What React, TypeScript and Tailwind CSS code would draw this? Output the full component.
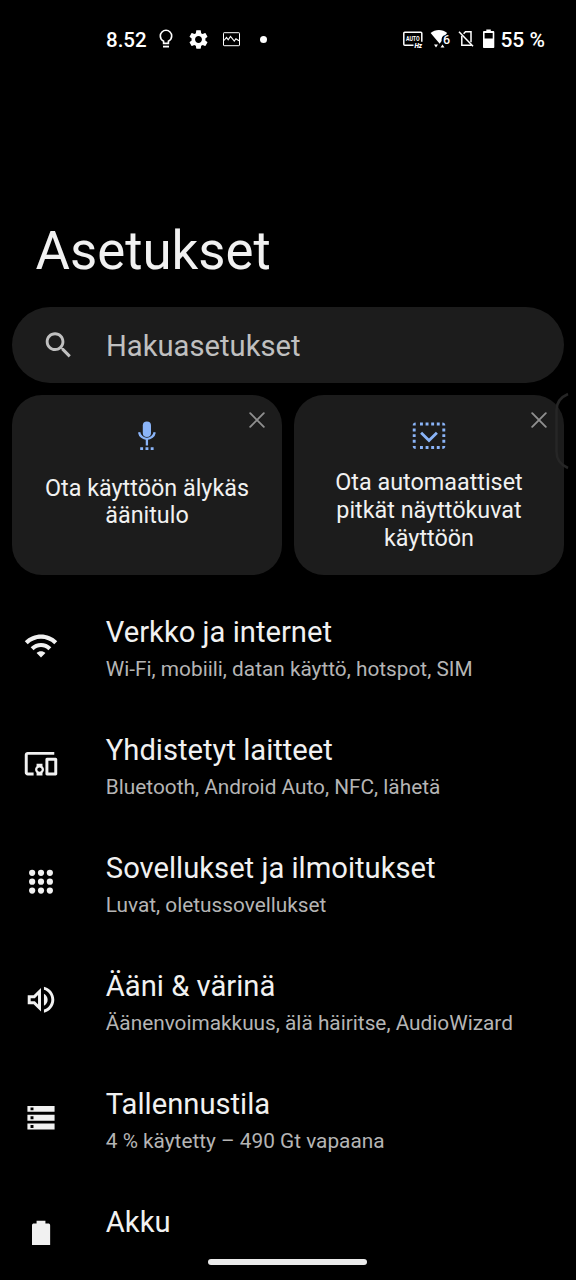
import type { ReactNode } from "react";

const items = [
  {
    title: "Verkko ja internet",
    summary: "Wi-Fi, mobiili, datan käyttö, hotspot, SIM",
    icon: (
      <path d="M1 9l2 2c4.97-4.97 13.03-4.97 18 0l2-2C16.93 2.93 7.08 2.93 1 9zm8 8l3 3 3-3c-1.65-1.66-4.34-1.66-6 0zm-4-4l2 2c2.76-2.76 7.24-2.76 10 0l2-2C15.14 9.14 8.87 9.14 5 13z" />
    ),
  },
  {
    title: "Yhdistetyt laitteet",
    summary: "Bluetooth, Android Auto, NFC, lähetä",
    icon: (
      <path d="M3 6h18V4H3c-1.1 0-2 .9-2 2v12c0 1.1.9 2 2 2h4v-2H3V6zm10 6H9v1.78c-.61.55-1 1.33-1 2.22s.39 1.67 1 2.22V20h4v-1.78c.61-.55 1-1.34 1-2.22s-.39-1.67-1-2.22V12zm-2 5.5c-.83 0-1.5-.67-1.5-1.5s.67-1.5 1.5-1.5 1.5.67 1.5 1.5-.67 1.5-1.5 1.5zM22 8h-6c-.5 0-1 .5-1 1v10c0 .5.5 1 1 1h6c.5 0 1-.5 1-1V9c0-.5-.5-1-1-1zm-1 10h-4v-8h4v8z" />
    ),
  },
  {
    title: "Sovellukset ja ilmoitukset",
    summary: "Luvat, oletussovellukset",
    icon: (
      <>
        {[6, 12, 18].map((cy) =>
          [6, 12, 18].map((cx) => (
            <circle key={`${cx}-${cy}`} cx={cx} cy={cy} r="2.1" />
          ))
        )}
      </>
    ),
  },
  {
    title: "Ääni & värinä",
    summary: "Äänenvoimakkuus, älä häiritse, AudioWizard",
    icon: (
      <path d="M3 9v6h4l5 5V4L7 9H3zm7-.17v6.34L7.83 13H5v-2h2.83L10 8.83zM16.5 12c0-1.77-1.02-3.29-2.5-4.03v8.05c1.48-.73 2.5-2.25 2.5-4.02zM14 3.23v2.06c2.89.86 5 3.54 5 6.71s-2.11 5.85-5 6.71v2.06c4.01-.91 7-4.49 7-8.77 0-4.28-2.99-7.86-7-8.77z" />
    ),
  },
  {
    title: "Tallennustila",
    summary: "4 % käytetty – 490 Gt vapaana",
    icon: (
      <path d="M2.8 4v4h18.4V4H2.8zm4.1 3h-2V5h2v2zM2.8 10v4h18.4v-4H2.8zm4.1 3h-2v-2h2v2zM2.8 16v4h18.4v-4H2.8zm4.1 3h-2v-2h2v2z" />
    ),
  },
  {
    title: "Akku",
    // row runs under the navigation bar, only the title is visible
    summary: "",
    icon: (
      <path d="M9 1.8h6v2h1.800c.9 0 1.400.4 1.400 1.200V18.300H5.900V5c0-.8.5-1.200 1.400-1.200H9z" />
    ),
  },
];

const StatusBar = () => (
  <header className="flex h-[78px] items-center pl-[106px] pr-[31px] text-white">
    <span className="w-[52px] pt-[3px] text-[20.5px] font-medium">8.52</span>
    <svg className="h-[20px] w-[16px]" viewBox="0 0 16 20" fill="none" stroke="currentColor">
      <path
        d="M5.6 14.4v-2.1C3.7 11.2 2.3 9.6 2.3 7a5.7 5.7 0 0 1 11.4 0c0 2.6-1.4 4.2-3.3 5.3v2.1z"
        strokeWidth="1.6"
      />
      <path d="M5 17.6h6" strokeWidth="1.8" />
    </svg>
    <svg className="ml-[13px] h-[23px] w-[23px]" viewBox="0 0 24 24" fill="currentColor">
      <path d="M19.14 12.94c.04-.3.06-.61.06-.94 0-.32-.02-.64-.07-.94l2.03-1.58c.18-.14.23-.41.12-.61l-1.92-3.32c-.12-.22-.37-.29-.59-.22l-2.39.96c-.5-.38-1.03-.7-1.62-.94l-.36-2.54c-.04-.24-.24-.41-.48-.41h-3.84c-.24 0-.43.17-.47.41l-.36 2.54c-.59.24-1.13.57-1.62.94l-2.39-.96c-.22-.08-.47 0-.59.22L2.74 8.87c-.12.21-.08.47.12.61l2.03 1.58c-.05.3-.09.63-.09.94s.02.64.07.94l-2.03 1.58c-.18.14-.23.41-.12.61l1.92 3.32c.12.22.37.29.59.22l2.39-.96c.5.38 1.03.7 1.62.94l.36 2.54c.05.24.24.41.48.41h3.84c.24 0 .44-.17.47-.41l.36-2.54c.59-.24 1.13-.56 1.62-.94l2.39.96c.22.08.47 0 .59-.22l1.92-3.32c.12-.22.07-.47-.12-.61l-2.01-1.58zM12 15.6c-1.98 0-3.6-1.62-3.6-3.6s1.62-3.6 3.6-3.6 3.6 1.62 3.6 3.6-1.62 3.6-3.6 3.6z" />
    </svg>
    <svg className="ml-[13px] h-[15px] w-[17px]" viewBox="0 0 17 15" fill="none" stroke="currentColor">
      <rect x=".5" y=".7" width="16" height="13" rx=".6" strokeWidth="1" />
      <path d="M1 8.5l2.5-3L5.2 7.8l2.3-3.3 3.8 4.5 1.6-2.3L16 8.8" strokeWidth="1.1" />
    </svg>
    <span className="ml-[20px] size-[7px] rounded-full bg-white" />

    <div className="ml-auto flex items-center">
      <svg className="h-[20px] w-[21px]" viewBox="0 0 21 20" fill="none" stroke="currentColor">
        <path d="M11.500 16.200H2.800a1 1 0 0 1-1-1V4.300a1 1 0 0 1 1-1h16a1 1 0 0 1 1 1v8.500" strokeWidth="1.5" />
        <text
          x="10.8"
          y="12"
          textAnchor="middle"
          textLength="13.8"
          lengthAdjust="spacingAndGlyphs"
          fill="currentColor"
          stroke="none"
          className="font-['Roboto',sans-serif] text-[7px] font-bold"
        >
          AUTO
        </text>
        <text x="12.4" y="18.7" fill="currentColor" stroke="none" className="font-['Roboto',sans-serif] text-[6.5px] font-black italic">
          Hz
        </text>
      </svg>
      <svg className="ml-[7px] h-[20px] w-[21px]" viewBox="0 0 21 20" fill="currentColor">
        <path d="M.6 4C5.2.1 12.6.1 17.2 4L15.3 6c-3 .6-4 3-3.7 6L9.7 14.8z" />
        <path d="M4 15.5h4l-2 3zM10.5 18.5h4l-2-3z" />
        <text x="13" y="14.8" className="font-['Roboto',sans-serif] text-[12.5px] font-medium">
          6
        </text>
      </svg>
      <svg className="ml-[7px] h-[20px] w-[17px]" viewBox="0 0 17 20" fill="none" stroke="currentColor" strokeWidth="1.5">
        <path d="M5.6 4.8L7.5 2.8h5.5v10.5M3.8 6.7v9.5h9.2v-1" />
        <path d="M1 2.8l14 14.5" />
      </svg>
      <svg className="ml-[7px] h-[20px] w-[13px]" viewBox="0 0 13 20" fill="currentColor">
        <path
          fillRule="evenodd"
          d="M4.300 .4h4.500v1.600h2.300c.8 0 1.200.4 1.200 1.100v14.800c0 .7-.4 1.100-1.200 1.100H2.200c-.8 0-1.200-.4-1.200-1.100V3.100c0-.7.4-1.100 1.200-1.100h2.100zM2.600 3.900v5.700h8.100V3.900z"
        />
      </svg>
      <span className="ml-[5px] pt-[3px] text-[21px] font-medium">55 %</span>
    </div>
  </header>
);

const SuggestionCard = ({ icon, children, textClass }: { icon: ReactNode; children: ReactNode; textClass: string }) => (
  <div className="relative flex h-[180px] flex-1 flex-col items-center rounded-[30px] bg-[#1c1c1c] pt-[23px]">
    <svg
      className="absolute right-[17px] top-[17px] size-[16px] text-[#8f8f8f]"
      viewBox="0 0 16 16"
      stroke="currentColor"
      strokeWidth="1.9"
      strokeLinecap="round"
    >
      <path d="M1.2 1.2l13.6 13.6M14.8 1.2L1.2 14.8" />
    </svg>
    <div className="flex h-[36px] items-center text-[#8ab4f8]">{icon}</div>
    <p className={`text-center text-[23.35px] leading-[27.8px] text-[#f1f1f1] ${textClass}`}>{children}</p>
  </div>
);

const MicIcon = () => (
  <svg className="h-[32px] w-[20px]" viewBox="0 0 20 32" fill="currentColor">
    <rect x="5.8" y="1.5" width="8.2" height="15.5" rx="4.1" />
    <path d="M2.1 12.2a7.9 7.9 0 0 0 15.6 0M9.9 19.5v6" fill="none" stroke="currentColor" strokeWidth="2.3" />
    <path d="M3.2 27.2h2.9v2.9H3.2zM8.5 27.2h2.9v2.9H8.5zM13.7 27.2h2.9v2.9h-2.9z" />
  </svg>
);

const LongShotIcon = () => (
  <svg className="h-[28px] w-[34px]" viewBox="0 0 34 28" fill="none" stroke="currentColor">
    <path d="M8 2h20" strokeWidth="2.9" strokeDasharray="2.9 2.7" />
    <path d="M8 25.5h20" strokeWidth="2.9" strokeDasharray="2.9 2.7" />
    <path d="M2.2 6.6v16M31.8 6.6v16" strokeWidth="2.9" strokeDasharray="2.9 2.7" />
    <path
      d="M.7 3.5C.7 1.6 1.8.6 3.7.6v2.9zM33.3 3.5c0-1.9-1.1-2.9-3-2.9v2.9zM.7 24c0 1.9 1.1 2.9 3 2.9V24zM33.3 24c0 1.9-1.1 2.9-3 2.9V24z"
      fill="currentColor"
      stroke="none"
    />
    <path d="M9.1 10.7l7.9 7.9 7.9-7.9" strokeWidth="2.8" />
  </svg>
);

export default function App() {
  return (
    <div className="relative h-[1280px] w-[576px] overflow-hidden bg-black font-['Roboto',sans-serif]">
      <StatusBar />

      <h1 className="mt-[142px] pl-[35.5px] text-[52.8px] leading-[62px] text-[#f1f1f1]">Asetukset</h1>

      <div className="mx-3 mt-[25px] flex h-[76px] items-center rounded-full bg-[#1c1c1c] pl-[29px] text-[#c0c0c0]">
        <svg className="size-[35px]" viewBox="-.3 0 24.4 24.4" fill="currentColor">
          <path d="M15.5 14h-.79l-.28-.27C15.41 12.59 16 11.11 16 9.5 16 5.91 13.09 3 9.5 3S3 5.91 3 9.5 5.91 16 9.5 16c1.61 0 3.09-.59 4.23-1.57l.27.28v.79l5 4.99L20.49 19l-4.99-5zm-6 0C7.01 14 5 11.99 5 9.5S7.01 5 9.5 5 14 7.01 14 9.5 11.99 14 9.5 14z" />
        </svg>
        <span className="ml-[30px] pt-[4px] text-[29.2px]">Hakuasetukset</span>
      </div>

      <div className="mx-3 mt-3 flex gap-3">
        <SuggestionCard icon={<MicIcon />} textClass="mt-[20.5px]">
          Ota käyttöön älykäs
          <br />
          äänitulo
        </SuggestionCard>
        <SuggestionCard icon={<LongShotIcon />} textClass="mt-[15px]">
          Ota automaattiset
          <br />
          pitkät näyttökuvat
          <br />
          käyttöön
        </SuggestionCard>
      </div>

      <ul className="mt-3">
        {items.map((item) => (
          <li key={item.title} className="flex h-[118px] pl-[23px]">
            <svg className="mt-[41px] size-[36px] text-[#f1f1f1]" viewBox="-.2 0 24.4 24.4" fill="currentColor">
              {item.icon}
            </svg>
            <div className="ml-[46.8px] pt-[28px]">
              <div className="text-[29.2px] leading-[35px] text-[#f1f1f1]">{item.title}</div>
              <div className="mt-[7px] text-[20.8px] leading-[24px] text-[#b5b5b5]">{item.summary}</div>
            </div>
          </li>
        ))}
      </ul>

      {/* edge panel handle */}
      <svg className="absolute left-[554px] top-[391px] h-[80px] w-[15px]" viewBox="0 0 15 80" fill="none" stroke="#262626" strokeWidth="2.5">
        <path d="M14 3C6 6.5 2.5 11 2.5 19v42c0 8 3.5 12.5 11.5 16" />
      </svg>

      <div className="absolute left-[208px] top-[1259px] h-[6px] w-[159px] rounded-full bg-[#ebebeb]" />
    </div>
  );
}
